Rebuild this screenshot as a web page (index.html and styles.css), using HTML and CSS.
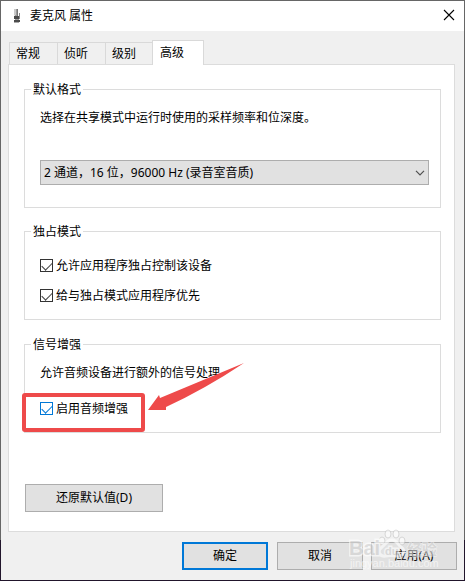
FILE: index.html
```html
<!DOCTYPE html>
<html lang="zh-CN">
<head>
<meta charset="utf-8">
<meta name="viewport" content="width=device-width, initial-scale=1">
<title>麦克风 属性</title>
<link rel="stylesheet" href="styles.css">
</head>
<body>
<div class="frame">
  <main class="dialog">
    <header class="titlebar">
      <svg class="mic" width="10" height="16" viewBox="0 0 10 16" aria-hidden="true">
        <path d="M3 1h4v9H4z" fill="#9a9a9a"/>
        <path d="M3 1h2v6H3z" fill="#c9c9c9"/>
        <path d="M6 1h1v8H6z" fill="#777"/>
        <path d="M3 8h5v3H3z" fill="#4a4a4a"/>
        <path d="M8 5h1v6H8z" fill="#888"/>
        <path d="M4 11h4v1H4z" fill="#999"/>
        <path d="M3 12h6v2H3z" fill="#4c4c4c"/>
        <path d="M3 14h5v1H3z" fill="#aaa"/>
      </svg>
      <h1 class="title">麦克风 属性</h1>
      <button class="close" type="button" aria-label="关闭">
        <svg width="12" height="12" viewBox="0 0 12 12"><path d="M1 1l10 10M11 1L1 11" fill="none" stroke="#000" stroke-width="1.1"/></svg>
      </button>
    </header>

    <div class="content">
      <div class="tabs" role="tablist">
        <button class="tab" type="button" role="tab">常规</button>
        <button class="tab" type="button" role="tab">侦听</button>
        <button class="tab" type="button" role="tab">级别</button>
        <button class="tab active" type="button" role="tab" aria-selected="true">高级</button>
      </div>

      <section class="panel" role="tabpanel">
        <fieldset class="group">
          <legend>默认格式</legend>
          <label class="text format-label" for="format">选择在共享模式中运行时使用的采样频率和位深度。</label>
          <div class="combo">
            <select id="format">
              <option>2 通道，16 位，96000 Hz (录音室音质)</option>
            </select>
            <svg class="chevron" width="10" height="6" viewBox="0 0 10 6" aria-hidden="true"><path d="M1 .8l4 4 4-4" fill="none" stroke="#505050" stroke-width="1.2"/></svg>
          </div>
        </fieldset>

        <fieldset class="group checks">
          <legend>独占模式</legend>
          <label class="check"><input type="checkbox" checked>允许应用程序独占控制该设备</label>
          <label class="check"><input type="checkbox" checked>给与独占模式应用程序优先</label>
        </fieldset>

        <fieldset class="group enhance">
          <legend>信号增强</legend>
          <p class="text">允许音频设备进行额外的信号处理</p>
          <label class="check hot"><input type="checkbox" checked>启用音频增强</label>
          <svg class="callout" width="226" height="72" viewBox="0 0 226 72" aria-hidden="true">
            <rect x="5" y="33" width="119" height="35" rx="1" fill="none" stroke="#ee4a4a" stroke-width="4"/>
            <path d="M225 1L141 36 140 33 129 48H147V45Q186 27 225 1Z" fill="#ee4a4a"/>
          </svg>
        </fieldset>

        <button class="btn restore" type="button">还原默认值(D)</button>
      </section>

      <footer class="actions">
        <button class="btn primary" type="button">确定</button>
        <button class="btn" type="button">取消</button>
        <button class="btn" type="button">应用(A)</button>
        <svg class="watermark" width="94" height="46" viewBox="0 0 94 46" aria-hidden="true">
          <g class="paw">
            <ellipse cx="33" cy="16" rx="3" ry="4"/>
            <ellipse cx="39" cy="9" rx="3" ry="4"/>
            <ellipse cx="47" cy="9" rx="3" ry="4"/>
            <ellipse cx="53" cy="16" rx="3" ry="4"/>
          </g>
          <path class="pad" d="M43 15c5 0 6 5 9 7 5 4 3 9-3 9-4 0-8-1-12 0-7 1-9-5-4-9 4-3 5-7 10-7z"/>
          <text class="mark mark-brand" x="0" y="30">Bai</text>
          <text class="mark mark-du" x="36" y="30">du</text>
          <text class="mark mark-cn" x="58" y="30">经验</text>
          <text class="mark-url" x="1" y="42">jingyan.baidu.com</text>
        </svg>
      </footer>
    </div>
  </main>
</div>
</body>
</html>
```
FILE: styles.css
```css
* {
  box-sizing: border-box;
}

body {
  margin: 0;
  font: 12px/18px "Noto Sans", "Noto Sans CJK SC", sans-serif;
  color: #000;
}

button,
select {
  font: inherit;
  color: inherit;
}

.frame {
  display: flex;
  min-height: 100vh;
  padding: 1px;
  background: linear-gradient(#666 0, #666 93%, #21152b 93%);
}

.dialog {
  flex: 1;
  display: flex;
  flex-direction: column;
  background: #f0f0f0;
}

.titlebar {
  display: flex;
  align-items: center;
  height: 30px;
  padding: 0 9px 0 10px;
  background: #fff;
}

.title {
  flex: 1;
  margin: 0 0 0 9px;
  font-size: 12px;
  font-weight: 400;
}

.close {
  display: flex;
  padding: 0 0 2px;
  border: 0;
  background: none;
}

.content {
  flex: 1;
  display: flex;
  flex-direction: column;
  padding: 9px 9px 10px 7px;
}

.tabs {
  display: flex;
  align-items: flex-end;
  padding-left: 1px;
}

.tab {
  width: 48px;
  height: 22px;
  padding: 0 6px;
  border: 1px solid #d9d9d9;
  border-width: 1px 0 0 1px;
  background: #f0f0f0;
  line-height: 21px;
  text-align: left;
}

.tab.active {
  z-index: 1;
  width: 52px;
  height: 25px;
  margin: 0 0 -1px -1px;
  padding: 0 7px 2px;
  border-right-width: 1px;
  background: #fff;
}

.panel {
  flex: 1;
  padding: 16px 13px 19px 15px;
  border: 1px solid #dcdcdc;
  background: #fff;
}

.group {
  position: relative;
  min-width: 0;
  margin: 0 0 15px;
  padding: 11px 11px 22px 15px;
  border: 1px solid #dcdcdc;
}

.group legend {
  margin-left: -9px;
  padding: 0 2px;
  line-height: 17px;
}

.group.checks {
  display: grid;
  gap: 12px;
  margin-bottom: 16px;
  padding: 17px 11px 14px 15px;
}

.group.enhance {
  margin-bottom: 51px;
  padding-bottom: 14px;
}

.text {
  display: block;
  margin: 0 0 18px;
}

.format-label {
  margin-bottom: 33px;
}

.combo {
  position: relative;
}

.combo select {
  display: block;
  width: 100%;
  height: 25px;
  padding: 0 24px 0 3px;
  border: 1px solid #adadad;
  border-radius: 0;
  background: #e1e1e1;
  appearance: none;
}

.chevron {
  position: absolute;
  top: 10px;
  right: 4px;
  pointer-events: none;
}

.check {
  display: flex;
  align-items: center;
  gap: 3px;
}

.check input {
  width: 13px;
  height: 13px;
  margin: 0 0 1px;
  border: 1px solid #333;
  background: #fff;
  appearance: none;
}

.check input:checked::before {
  content: "";
  display: block;
  width: 9px;
  height: 5px;
  margin: 2px 0 0 1px;
  border: solid #404040;
  border-width: 0 0 1px 1px;
  transform: rotate(-45deg);
}

.check.hot input,
.check.hot input:checked::before {
  border-color: #0078d7;
}

.callout {
  position: absolute;
  top: 9px;
  left: -6px;
  pointer-events: none;
}

.btn {
  width: 86px;
  height: 28px;
  padding: 0;
  border: 1px solid #adadad;
  background: #e1e1e1;
}

.btn.primary {
  margin-right: 1px;
  border: 2px solid #0078d7;
}

.btn.restore {
  display: block;
  width: 138px;
  margin-left: 1px;
}

.actions {
  position: relative;
  display: flex;
  justify-content: flex-end;
  gap: 8px;
  margin: 10px -2px 0 0;
}

.watermark {
  position: absolute;
  right: 14px;
  bottom: -1px;
  opacity: 0.6;
  pointer-events: none;
}

.paw {
  fill: #fff;
  stroke: #c6c6c6;
  stroke-width: 1px;
}

.pad {
  fill: none;
  stroke: #fff;
  stroke-width: 3px;
}

.mark {
  fill: #d2d2d2;
  stroke: #fff;
  stroke-width: 3px;
  paint-order: stroke;
}

.mark-brand {
  font: 700 20px "Liberation Sans", sans-serif;
}

.mark-du {
  font: 700 11px "Liberation Sans", sans-serif;
}

.mark-cn {
  stroke-width: 1px;
  font: 700 15px "Noto Sans CJK SC", sans-serif;
}

.mark-url {
  fill: #fff;
  font: 11px "Liberation Sans", sans-serif;
}
```
